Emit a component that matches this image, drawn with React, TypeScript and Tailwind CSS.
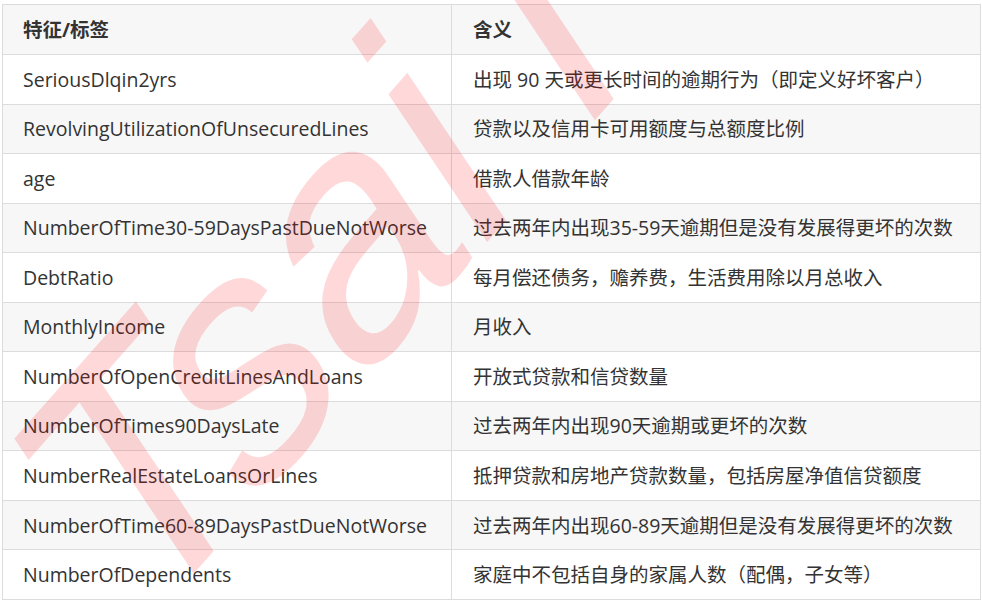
import React from 'react';

const rows: [string, string][] = [
  ['SeriousDlqin2yrs', '出现 90 天或更长时间的逾期行为（即定义好坏客户）'],
  ['RevolvingUtilizationOfUnsecuredLines', '贷款以及信用卡可用额度与总额度比例'],
  ['age', '借款人借款年龄'],
  ['NumberOfTime30-59DaysPastDueNotWorse', '过去两年内出现35-59天逾期但是没有发展得更坏的次数'],
  ['DebtRatio', '每月偿还债务，赡养费，生活费用除以月总收入'],
  ['MonthlyIncome', '月收入'],
  ['NumberOfOpenCreditLinesAndLoans', '开放式贷款和信贷数量'],
  ['NumberOfTimes90DaysLate', '过去两年内出现90天逾期或更坏的次数'],
  ['NumberRealEstateLoansOrLines', '抵押贷款和房地产贷款数量，包括房屋净值信贷额度'],
  ['NumberOfTime60-89DaysPastDueNotWorse', '过去两年内出现60-89天逾期但是没有发展得更坏的次数'],
  ['NumberOfDependents', '家庭中不包括自身的家属人数（配偶，子女等）'],
];

export default function App() {
  return (
    <div className="relative w-[982px] h-[601px] overflow-hidden bg-white pt-[4px] pl-[2px] font-['Open_Sans','Noto_Sans_CJK_SC',sans-serif] text-[19.5px] text-[#333]">
      <table className="w-[979px] border-collapse table-fixed">
        <colgroup>
          <col className="w-[449px]" />
          <col />
        </colgroup>
        <thead>
          <tr className="h-[50px] bg-[#f7f7f7]">
            <th className="border border-[#dcdcdc] pl-[20px] text-left font-bold">特征/标签</th>
            <th className="border border-[#dcdcdc] pl-[21px] text-left font-bold">含义</th>
          </tr>
        </thead>
        <tbody>
          {rows.map(([name, desc], i) => (
            <tr key={name} className={i % 2 === 1 ? 'h-[49.55px] bg-[#f7f7f7]' : 'h-[49.55px] bg-white'}>
              <td className="border border-[#dcdcdc] pl-[20px] whitespace-nowrap">{name}</td>
              <td className="border border-[#dcdcdc] pl-[21px] whitespace-nowrap">{desc}</td>
            </tr>
          ))}
        </tbody>
      </table>

      {/* watermark */}
      <span
        className="pointer-events-none absolute left-[-20px] top-[400px] origin-top-left whitespace-pre font-['Liberation_Sans',sans-serif] text-[285px] leading-none text-[rgba(255,0,0,0.15)] [transform:scaleY(1.3)_rotate(-41deg)]"
      >
        {'Tsai l'}
      </span>
    </div>
  );
}
